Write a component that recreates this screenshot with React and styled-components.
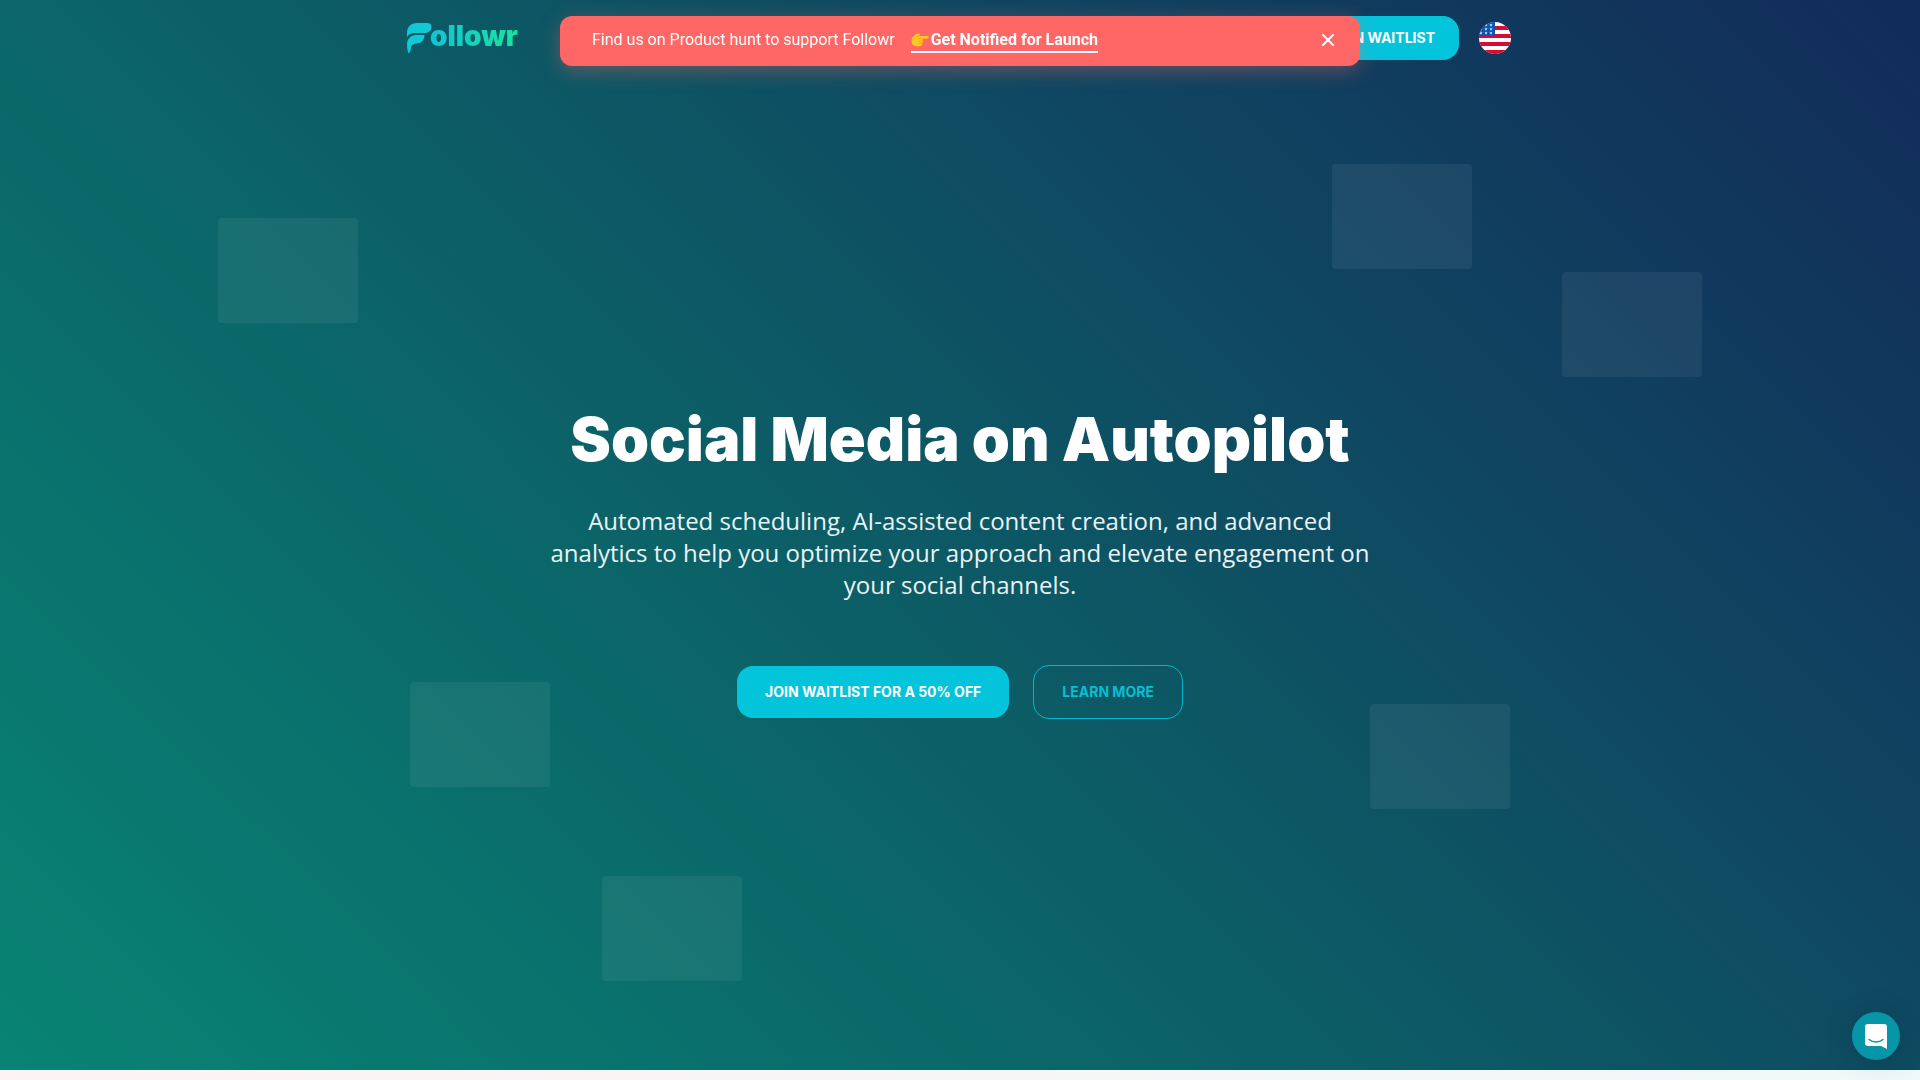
import React from "react";
import styled, { createGlobalStyle } from "styled-components";

const GlobalStyle = createGlobalStyle`
  *, *::before, *::after { box-sizing: border-box; }
  body { margin: 0; font-family: "Open Sans", sans-serif; }
`;

const Page = styled.div`
  min-height: 100vh;
  display: flex;
  flex-direction: column;
`;

const Hero = styled.section`
  position: relative;
  flex: 1;
  display: flex;
  flex-direction: column;
  overflow: hidden;
  color: #fff;
  background: linear-gradient(45deg, #088474 0%, #0b6468 38%, #0d5564 54%, #0f4761 68%, #122b59 100%);
`;

const NextSection = styled.div`
  height: 10px;
  background: linear-gradient(90deg, #fdf3f4, #eff8f8);
`;

const Header = styled.header`
  width: 100%;
  max-width: 1146px;
  margin: 0 auto;
  padding: 16px 22px 16px 20px;
  display: flex;
  align-items: center;
  justify-content: space-between;
`;

const Logo = styled.a`
  display: flex;
  align-items: center;
  height: 44px;
  text-decoration: none;

  svg { display: block; margin-right: -2px; }
`;

const LogoText = styled.span`
  font: 900 28px/32px Inter, sans-serif;
  color: transparent;
  background: linear-gradient(90deg, #10c4d4, #18e4a0);
  background-clip: text;
  -webkit-background-clip: text;
  margin-bottom: 4px;
`;

const HeaderActions = styled.div`
  display: flex;
  align-items: center;
  gap: 20px;
`;

const Button = styled.button`
  height: ${(p) => (p.$size === "small" ? 44 : p.$outline ? 54 : 52)}px;
  padding: 0 ${(p) => (p.$size === "small" ? 24 : 28)}px;
  border: ${(p) => (p.$outline ? "1px solid #06b5ca" : "0")};
  border-radius: 16px;
  background: ${(p) => (p.$outline ? "transparent" : "#04c4dc")};
  color: ${(p) => (p.$outline ? "#0abdd3" : "#fff")};
  font: 700 14px/20px Inter, sans-serif;
  text-transform: uppercase;
  white-space: nowrap;
  cursor: pointer;
`;

const LanguageButton = styled.button`
  width: 32px;
  height: 32px;
  padding: 0;
  border: 0;
  border-radius: 50%;
  overflow: hidden;
  background: none;
  cursor: pointer;

  svg { display: block; }
`;

const Banner = styled.aside`
  position: fixed;
  z-index: 2;
  top: 16px;
  left: 0;
  right: 0;
  margin: 0 auto;
  width: 800px;
  max-width: 100%;
  height: 50px;
  padding: 0 20px 2px 32px;
  display: flex;
  align-items: center;
  gap: 16px;
  border-radius: 12px;
  background: #ff6666;
  box-shadow: 0 5px 20px rgba(255, 102, 102, 0.35);
  font: 400 16px/24px Roboto, sans-serif;
  color: #fff;
`;

const BannerLink = styled.a`
  display: flex;
  align-items: center;
  gap: 2px;
  margin-top: 2px;
  border-bottom: 2px solid #fff;
  color: #fff;
  font-weight: 700;
  line-height: 22px;
  text-decoration: none;
`;

const CloseButton = styled.button`
  margin-left: auto;
  width: 24px;
  height: 24px;
  padding: 0;
  display: grid;
  place-items: center;
  border: 0;
  background: none;
  color: #fff;
  cursor: pointer;
`;

const HeroContent = styled.main`
  position: relative;
  flex: 1;
  padding: 0 20px 24px;
  display: flex;
  flex-direction: column;
  align-items: center;
  justify-content: center;
  text-align: center;
`;

const Title = styled.h1`
  margin: 0 0 30px;
  font: 900 61px/72px Inter, sans-serif;
`;

const Lead = styled.p`
  max-width: 840px;
  margin: 0 0 64px;
  font: 400 24px/32px "Open Sans", sans-serif;
  color: #e9f3f5;
`;

const Actions = styled.div`
  display: flex;
  align-items: center;
  gap: 24px;
`;

const FloatingCard = styled.div`
  position: absolute;
  left: ${(p) => p.$left}%;
  top: ${(p) => p.$top}px;
  width: 140px;
  height: 105px;
  border-radius: 4px;
  background: rgba(255, 255, 255, 0.06);
`;

const ChatButton = styled.button`
  position: fixed;
  right: 20px;
  bottom: 20px;
  width: 48px;
  height: 48px;
  padding: 0;
  display: grid;
  place-items: center;
  border: 0;
  border-radius: 50%;
  background: #0795a8;
  box-shadow: 0 1px 6px rgba(0, 0, 0, 0.06), 0 2px 32px rgba(0, 0, 0, 0.12);
  cursor: pointer;
`;

const cards = [
  { left: 11.35, top: 218 },
  { left: 69.4, top: 164 },
  { left: 81.35, top: 272 },
  { left: 21.35, top: 682 },
  { left: 71.35, top: 704 },
  { left: 31.35, top: 876 },
];

const LogoMark = () => (
  <svg width="25" height="31" viewBox="0 0 25 31" aria-hidden="true">
    <path fill="#10c8d6" d="M0 14V10C0 4 4 0 10 0h10.500a4 4 0 0 1 4 4C24.500 8 21 10 17 10H8C4 10 2 11 0 14Z" />
    <path fill="#10c8d6" d="M0 21C0 16 4 12 9 12h8.500c0 5-3 8-8 8.500C5 21 4 23 4 25c0 2-1 4-2.500 5.500C.5 28 0 25 0 21Z" />
  </svg>
);

const Flag = () => (
  <svg width="32" height="32" viewBox="0 0 32 32" aria-hidden="true">
    <path fill="#fff" d="M0 0h32v32H0z" />
    <path fill="#d80b32" d="M0 4h32v4H0zM0 12h32v4H0zM0 20h32v4H0zM0 28h32v4H0z" />
    <path fill="#0b55b5" d="M0 0h16v14H0z" />
    {[3, 7, 11].map((y) =>
      [2, 7, 12].map((x) => (
        <path
          key={`${x}-${y}`}
          fill="#dcecff"
          transform={`translate(${x} ${y})`}
          d="M0-1.600.5-.5 1.600-.5.7.300 1 1.500 0 .8-1 1.500-.7.300-1.600-.5-.5-.5Z"
        />
      ))
    )}
  </svg>
);

const PointingHand = () => (
  <svg width="18" height="14" viewBox="0 0 18 14" aria-hidden="true">
    <path
      fill="#ffc720"
      d="M1 4.500 4.500 1.500C6 .3 8 .2 9 1L8 3h8.500a1.300 1.300 0 0 1 0 2.700H11c1.400.3 1.500 2 .3 2.400 1 .6.8 2-.3 2.200.7.900.2 1.900-.9 1.900C9.500 13.500 7 13.600 4.500 13 2 12.500.5 11 .5 8.500Z"
    />
    <path fill="none" stroke="#f09a12" strokeWidth=".8" d="M7 5.700h4M7.500 8.100h3.800M7.500 10.400h3.300M8 3 6 4.800" />
  </svg>
);

export default function App() {
  return (
    <Page>
      <GlobalStyle />
      <Hero>
        {cards.map((card) => (
          <FloatingCard key={card.top} $left={card.left} $top={card.top} />
        ))}
        <Header>
          <Logo href="#" aria-label="Followr">
            <LogoMark />
            <LogoText>ollowr</LogoText>
          </Logo>
          <HeaderActions>
            <Button type="button" $size="small">Join waitlist</Button>
            <LanguageButton type="button" aria-label="Language: English">
              <Flag />
            </LanguageButton>
          </HeaderActions>
        </Header>
        <HeroContent>
          <Title>Social Media on Autopilot</Title>
          <Lead>
            Automated scheduling, AI-assisted content creation, and advanced analytics to help you
            optimize your approach and elevate engagement on your social channels.
          </Lead>
          <Actions>
            <Button type="button">Join waitlist for a 50% off</Button>
            <Button type="button" $outline>Learn more</Button>
          </Actions>
        </HeroContent>
      </Hero>
      <NextSection />
      <Banner>
        <span>Find us on Product hunt to support Followr</span>
        <BannerLink href="#">
          <PointingHand />
          Get Notified for Launch
        </BannerLink>
        <CloseButton type="button" aria-label="Close">
          <svg width="12" height="12" viewBox="0 0 12 12" aria-hidden="true">
            <path d="M1 1l10 10M11 1 1 11" stroke="currentColor" strokeWidth="2" strokeLinecap="round" />
          </svg>
        </CloseButton>
      </Banner>
      <ChatButton type="button" aria-label="Open chat">
        <svg width="22" height="25" viewBox="0 0 22 25" aria-hidden="true">
          <path fill="#fff" d="M3 0h16a3 3 0 0 1 3 3v22l-6-3H3a3 3 0 0 1-3-3V3a3 3 0 0 1 3-3Z" />
          <path d="M4 15.500c4 3.300 10 3.300 14 0" fill="none" stroke="#0795a8" strokeWidth="1.500" strokeLinecap="round" />
        </svg>
      </ChatButton>
    </Page>
  );
}
